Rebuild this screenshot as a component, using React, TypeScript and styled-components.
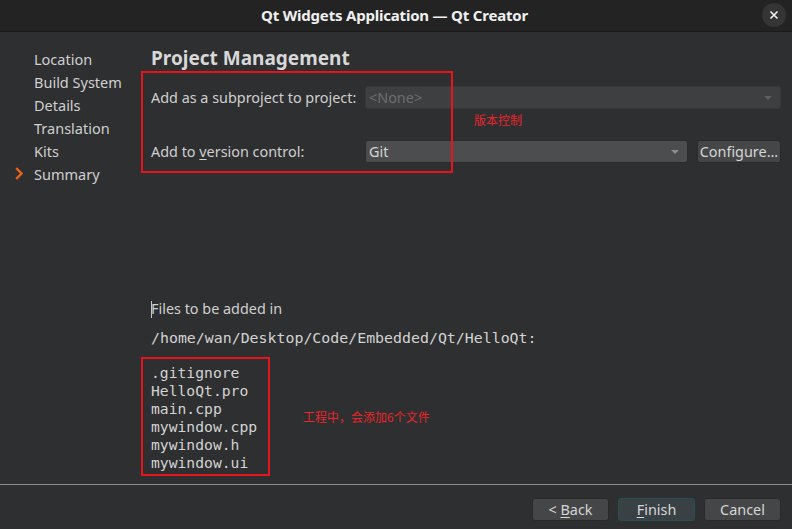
import React from "react";
import styled, { createGlobalStyle } from "styled-components";

const Global = createGlobalStyle`
  html, body { margin: 0; padding: 0; background: #2e2f30; }
  body { font-family: "Noto Sans", "Liberation Sans", sans-serif; }
`;

const Window = styled.div`
  width: 792px;
  height: 529px;
  display: flex;
  flex-direction: column;
  background: #2e2f30;
  color: #d3d3d3;
  overflow: hidden;
`;

const TitleBar = styled.div`
  height: 31px;
  flex: none;
  background: #232323;
  border-bottom: 1px solid #1a1a1a;
  display: flex;
  align-items: center;
  justify-content: center;
  position: relative;
`;

const Title = styled.div`
  font-size: 15px;
  font-weight: 700;
  color: #f0f0f0;
  letter-spacing: -0.2px;
  margin-top: -1px;
  margin-left: -3px;
`;

const CloseButton = styled.div`
  position: absolute;
  right: 6px;
  top: 3px;
  width: 24px;
  height: 24px;
  border-radius: 50%;
  background: #353535;
  display: flex;
  align-items: center;
  justify-content: center;
`;

const Main = styled.div`
  flex: 1;
  display: flex;
  min-height: 0;
`;

const Sidebar = styled.div`
  width: 151px;
  flex: none;
  padding-top: 15px;
  display: flex;
  flex-direction: column;
`;

const NavItem = styled.div`
  height: 23px;
  display: flex;
  align-items: center;
  font-size: 14.5px;
  color: #d0d0d0;
  padding-left: 34px;
  position: relative;
`;

const NavMarker = styled.svg`
  position: absolute;
  left: 15px;
  top: 5px;
`;

const Content = styled.div`
  flex: 1;
  padding: 14px 11px 8px 0;
  display: flex;
  flex-direction: column;
`;

const Heading = styled.div`
  font-size: 19px;
  font-weight: 700;
  line-height: 24px;
  color: #d8d8d8;
`;

const Form = styled.div`
  margin-top: 16px;
  display: grid;
  grid-template-columns: 214px 1fr 84px;
  column-gap: 9px;
  row-gap: 31px;
  align-items: center;
  position: relative;
`;

const Label = styled.div`
  font-size: 14.4px;
  color: #d0d0d0;
`;

const Combo = styled.div<{ $disabled?: boolean; $span?: number }>`
  grid-column: ${(p) => (p.$span === 2 ? "2 / span 2" : "2")};
  height: 23px;
  box-sizing: border-box;
  border-radius: 3px;
  border: 1px solid ${(p) => (p.$disabled ? "#373839" : "#2c2c2d")};
  background: ${(p) => (p.$disabled ? "#3e3f40" : "#4c4d4e")};
  color: ${(p) => (p.$disabled ? "#6d6e6f" : "#d6d6d6")};
  font-size: 14.4px;
  display: flex;
  align-items: center;
  padding: 0 8px 0 3px;
  margin-left: -9px;
  justify-content: space-between;
`;

const Arrow = styled.span<{ $disabled?: boolean }>`
  width: 0;
  height: 0;
  border-left: 4px solid transparent;
  border-right: 4px solid transparent;
  border-top: 4px solid ${(p) => (p.$disabled ? "#5c5d5e" : "#8e8e8e")};
`;

const Button = styled.div<{ $primary?: boolean }>`
  height: 23px;
  box-sizing: border-box;
  border-radius: 3px;
  border: 1px solid ${(p) => (p.$primary ? "#274f57" : "#2a2a2b")};
  background: ${(p) => (p.$primary ? "#3a4144" : "#454647")};
  color: #d6d6d6;
  font-size: 14.4px;
  display: flex;
  align-items: center;
  justify-content: center;
  white-space: pre;
  width: 77px;
`;

const ConfigureButton = styled(Button)`
  width: 84px;
`;

const Mnemonic = styled.span`
  text-decoration: underline;
  text-underline-offset: 2px;
`;

const Annotation = styled.div`
  position: absolute;
  border: 2px solid #e8141c;
  box-sizing: border-box;
  pointer-events: none;
`;

const Note = styled.div`
  color: #e8262c;
  font-family: "Noto Sans CJK SC", sans-serif;
  font-size: 12px;
  line-height: 16px;
`;

const FloatingNote = styled(Note)`
  position: absolute;
  left: 323px;
  top: 26px;
`;

const Files = styled.div`
  margin-top: auto;
  display: flex;
  flex-direction: column;
`;

const FilesIntro = styled.div`
  font-size: 14.4px;
  line-height: 20px;
  color: #d0d0d0;
  position: relative;
`;

const Caret = styled.span`
  position: absolute;
  left: 0;
  top: 2px;
  width: 1px;
  height: 17px;
  background: #c8c8c8;
`;

const Path = styled.div`
  margin-top: 9px;
  font-family: "DejaVu Sans Mono", monospace;
  font-size: 14.9px;
  line-height: 20px;
  color: #d3d3d3;
`;

const ListRow = styled.div`
  margin-top: 9px;
  display: flex;
  align-items: center;
  gap: 33px;
  margin-left: -10px;
`;

const FileBox = styled.div`
  border: 2px solid #e8141c;
  padding: 5px 18px 2px 8px;
  width: 129px;
  box-sizing: border-box;
`;

const FileName = styled.div`
  font-family: "DejaVu Sans Mono", monospace;
  font-size: 14.7px;
  line-height: 18px;
  color: #d3d3d3;
  white-space: nowrap;
`;

const Footer = styled.div`
  height: 45px;
  flex: none;
  border-top: 1px solid #8c8c8c;
  display: flex;
  justify-content: flex-end;
  gap: 9px;
  padding: 13px 11px 0 0;
  box-sizing: border-box;
`;

const navItems = ["Location", "Build System", "Details", "Translation", "Kits", "Summary"];
const files = [".gitignore", "HelloQt.pro", "main.cpp", "mywindow.cpp", "mywindow.h", "mywindow.ui"];

export default function App() {
  return (
    <>
      <Global />
      <Window>
        <TitleBar>
          <Title>Qt Widgets Application — Qt Creator</Title>
          <CloseButton>
            <svg width="10" height="10" viewBox="0 0 10 10">
              <path d="M1.5 1.5 L8.5 8.5 M8.5 1.5 L1.5 8.5" stroke="#f2f2f2" strokeWidth="1.6" />
            </svg>
          </CloseButton>
        </TitleBar>
        <Main>
          <Sidebar>
            {navItems.map((n, i) => (
              <NavItem key={n}>
                {i === navItems.length - 1 && (
                  <NavMarker width="8" height="13" viewBox="0 0 8 13">
                    <path d="M1.2 1.2 L6.5 6.5 L1.2 11.8" fill="none" stroke="#e8621a" strokeWidth="2.4" />
                  </NavMarker>
                )}
                {n}
              </NavItem>
            ))}
          </Sidebar>
          <Content>
            <Heading>Project Management</Heading>
            <Form>
              <Label>Add as a subproject to project:</Label>
              <Combo $disabled $span={2}>
                &lt;None&gt;
                <Arrow $disabled />
              </Combo>
              <Label>
                Add to <Mnemonic>v</Mnemonic>ersion control:
              </Label>
              <Combo>
                Git
                <Arrow />
              </Combo>
              <ConfigureButton>Configure...</ConfigureButton>
              <Annotation style={{ left: -10, top: -15, width: 312, height: 102 }} />
              <FloatingNote>版本控制</FloatingNote>
            </Form>
            <Files>
              <FilesIntro>
                <Caret />
                Files to be added in
              </FilesIntro>
              <Path>/home/wan/Desktop/Code/Embedded/Qt/HelloQt:</Path>
              <ListRow>
                <FileBox>
                  {files.map((f) => (
                    <FileName key={f}>{f}</FileName>
                  ))}
                </FileBox>
                <Note>工程中，会添加6个文件</Note>
              </ListRow>
            </Files>
          </Content>
        </Main>
        <Footer>
          <Button>
            {"< "}
            <Mnemonic>B</Mnemonic>
            {"ack"}
          </Button>
          <Button $primary>
            <Mnemonic>F</Mnemonic>
            {"inish"}
          </Button>
          <Button>Cancel</Button>
        </Footer>
      </Window>
    </>
  );
}
